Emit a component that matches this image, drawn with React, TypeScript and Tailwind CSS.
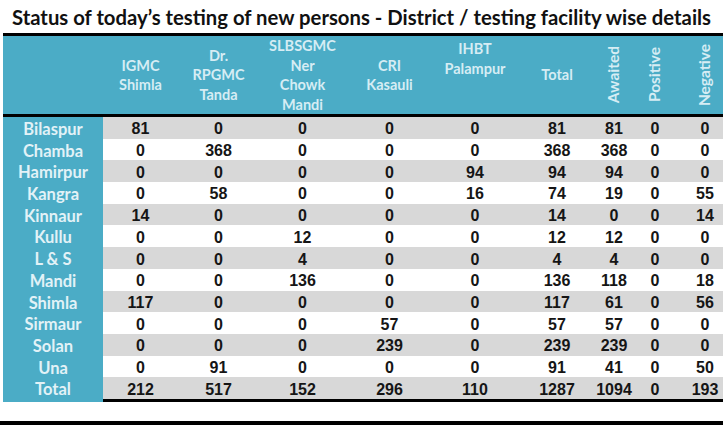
const cols = "grid grid-cols-[100px_75px_81px_87px_87px_84px_80px_34px_48px_52px]";

const rows: [string, number[]][] = [
  ["Bilaspur", [81, 0, 0, 0, 0, 81, 81, 0, 0]],
  ["Chamba", [0, 368, 0, 0, 0, 368, 368, 0, 0]],
  ["Hamirpur", [0, 0, 0, 0, 94, 94, 94, 0, 0]],
  ["Kangra", [0, 58, 0, 0, 16, 74, 19, 0, 55]],
  ["Kinnaur", [14, 0, 0, 0, 0, 14, 0, 0, 14]],
  ["Kullu", [0, 0, 12, 0, 0, 12, 12, 0, 0]],
  ["L & S", [0, 0, 4, 0, 0, 4, 4, 0, 0]],
  ["Mandi", [0, 0, 136, 0, 0, 136, 118, 0, 18]],
  ["Shimla", [117, 0, 0, 0, 0, 117, 61, 0, 56]],
  ["Sirmaur", [0, 0, 0, 57, 0, 57, 57, 0, 0]],
  ["Solan", [0, 0, 0, 239, 0, 239, 239, 0, 0]],
  ["Una", [0, 91, 0, 0, 0, 91, 41, 0, 50]],
  ["Total", [212, 517, 152, 296, 110, 1287, 1094, 0, 193]],
];

const HeadCell = ({ lines, top }: { lines: string[]; top?: boolean }) => (
  <div
    className={
      "flex flex-col items-center text-center leading-[19.5px] " +
      (top ? "justify-start pt-[3px]" : "justify-center")
    }
  >
    {lines.map((l) => (
      <span key={l}>{l}</span>
    ))}
  </div>
);

const VertCell = ({ label }: { label: string }) => (
  <div className="flex items-center justify-center">
    <span className="[writing-mode:vertical-rl] rotate-180 leading-none text-[15.5px]">{label}</span>
  </div>
);

export default function App() {
  return (
    <div className="w-[723px] h-[425px] bg-white overflow-hidden">
      <div className="pt-[4px] pl-[12px] h-[33px] font-['Lato',sans-serif] font-bold text-[20.3px] leading-[26px] text-[#111] whitespace-nowrap">
        Status of today’s testing of new persons - District / testing facility wise details
      </div>

      <div className="ml-[3px] w-[728px]">
        <div className="border-t-[3px] border-black" />
        <div
          className={`${cols} h-[78px] bg-[#4bacc6] text-[#d6edf4] font-['Lato',sans-serif] font-bold text-[14.5px]`}
        >
          <div />
          <HeadCell lines={["IGMC", "Shimla"]} />
          <HeadCell lines={["Dr.", "RPGMC", "Tanda"]} />
          <HeadCell lines={["SLBSGMC", "Ner", "Chowk", "Mandi"]} />
          <HeadCell lines={["CRI", "Kasauli"]} />
          <HeadCell lines={["IHBT", "Palampur"]} top />
          <HeadCell lines={["Total"]} />
          <VertCell label="Awaited" />
          <VertCell label="Positive" />
          <VertCell label="Negative" />
        </div>
        <div className="h-[3px] bg-black" />

        {rows.map(([name, vals], i) => (
          <div
            key={name}
            className={`${cols} h-[21.7px] ${i % 2 === 0 ? "bg-[#d8d8d8]" : "bg-white"}`}
          >
            <div className="bg-[#4bacc6] flex items-center justify-center font-['Lato',sans-serif] font-bold text-[16.5px] text-[#e2f2f7]">
              {name}
            </div>
            {vals.map((v, j) => (
              <div
                key={j}
                className="flex items-center justify-center font-['Liberation_Sans',sans-serif] font-bold text-[16px] text-[#151515]"
              >
                {v}
              </div>
            ))}
          </div>
        ))}
        <div className="h-[3px] bg-black" />
      </div>

      <div className="mt-[19px] h-[4px] bg-black" />
    </div>
  );
}
